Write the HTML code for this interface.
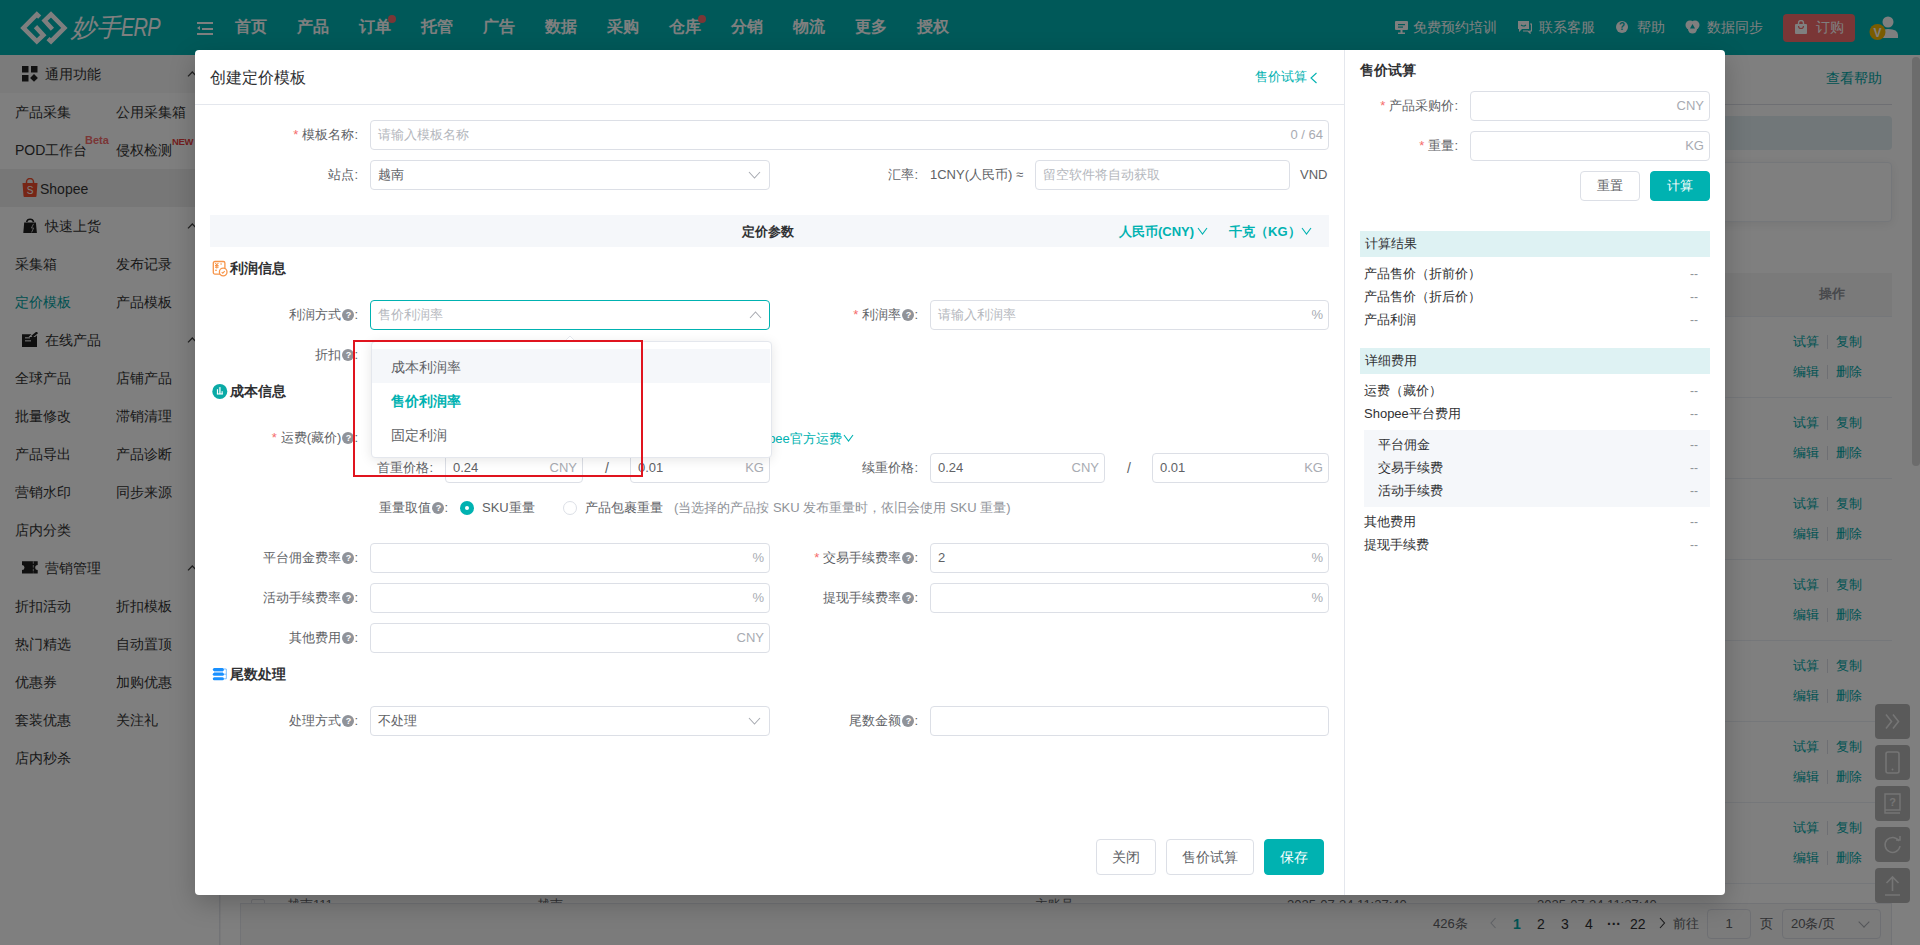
<!DOCTYPE html>
<html><head><meta charset="utf-8">
<style>
*{box-sizing:border-box;margin:0;padding:0}
html,body{width:1920px;height:945px;overflow:hidden;background:#f2f3f5;font-family:"Liberation Sans",sans-serif;color:#333}
.a{position:absolute}
.hdr{left:0;top:0;width:1920px;height:55px;background:#00b3b3}
.nav{top:14px;height:26px;line-height:26px;font-size:16px;font-weight:bold;color:#fff}
.hr{top:14px;height:26px;line-height:26px;font-size:14px;color:#fff}
.side{left:0;top:55px;width:220px;height:890px;background:#fff;border-right:1px solid #e4e7ed}
.sh{left:0;width:220px;height:38px;background:#f6f6f6}
.st{font-size:14px;color:#333;height:38px;line-height:38px;white-space:nowrap}
.mask{left:0;top:0;width:1920px;height:945px;background:rgba(0,0,0,.5)}
.modal{left:195px;top:50px;width:1530px;height:845px;background:#fff;border-radius:4px;box-shadow:0 8px 26px rgba(0,0,0,.22)}
.lbl{font-size:13px;color:#606266;height:30px;line-height:30px;text-align:right;white-space:nowrap}
.inp{height:30px;border:1px solid #dcdfe6;border-radius:4px;background:#fff;font-size:13px;line-height:28px;padding-left:7px;color:#606266;white-space:nowrap}
.ph{color:#b4b7bd}
.sfx{position:absolute;right:5px;top:0;color:#a8abb2;font-size:13px}
.star{color:#f56c6c;margin-right:4px}
.q{display:inline-block;width:12px;height:12px;border-radius:50%;background:#909399;color:#fff;font-size:9px;line-height:12px;text-align:center;font-weight:bold;vertical-align:1px;margin-left:1px}
.arr{position:absolute;right:10px;top:10px;width:8px;height:8px;border-right:1px solid #a8abb2;border-bottom:1px solid #a8abb2;transform:rotate(45deg)}
.sec{font-size:14px;font-weight:bold;color:#303133;height:20px;line-height:20px}
.btn{height:36px;border:1px solid #dcdfe6;border-radius:4px;background:#fff;font-size:14px;line-height:34px;text-align:center;color:#606266}
.btnp{background:#00b2b1;border-color:#00b2b1;color:#fff}
.teal{color:#00b2b1}
</style></head><body>

<!-- ============ BACKGROUND PAGE ============ -->
<div class="a hdr"></div>
<!-- logo -->
<svg class="a" style="left:16px;top:8px" width="56" height="40" viewBox="0 0 56 40">
<g fill="none" stroke="#fff" stroke-width="4.5" stroke-linejoin="miter" stroke-linecap="butt">
<path d="M23.7 9.2 L20.8 6.4 L7.4 19.9 L20.8 33.4 L27.35 27.1 L19.5 18.6"/>
<path d="M32 30.7 L35 33.4 L48.4 19.9 L35 6.45 L28.6 12.7 L36.4 21.2"/>
</g></svg>
<div class="a" style="left:71px;top:10px;height:34px;line-height:34px;font-size:25px;font-style:italic;color:#fff;white-space:nowrap">妙手<span style="display:inline-block;transform:scaleX(.8);transform-origin:0 50%;letter-spacing:-1px">ERP</span></div>
<div class="a" style="left:197px;top:22px;width:16px;height:13px">
 <div class="a" style="left:0;top:0;width:16px;height:2px;background:#fff"></div>
 <div class="a" style="left:5px;top:5.5px;width:11px;height:2px;background:#fff"></div>
 <div class="a" style="left:0;top:11px;width:16px;height:2px;background:#fff"></div>
 <div class="a" style="left:0;top:4px;width:0;height:0;border-top:2.5px solid transparent;border-bottom:2.5px solid transparent;border-right:3.5px solid #fff"></div>
</div>
<div class="a nav" style="left:235px">首页</div>
<div class="a nav" style="left:297px">产品</div>
<div class="a nav" style="left:359px">订单</div>
<div class="a nav" style="left:421px">托管</div>
<div class="a nav" style="left:483px">广告</div>
<div class="a nav" style="left:545px">数据</div>
<div class="a nav" style="left:607px">采购</div>
<div class="a nav" style="left:669px">仓库</div>
<div class="a nav" style="left:731px">分销</div>
<div class="a nav" style="left:793px">物流</div>
<div class="a nav" style="left:855px">更多</div>
<div class="a nav" style="left:917px">授权</div>
<div class="a" style="left:388px;top:15px;width:8px;height:8px;border-radius:50%;background:#f56c6c"></div>
<div class="a" style="left:698px;top:15px;width:8px;height:8px;border-radius:50%;background:#f56c6c"></div>

<svg class="a" style="left:1395px;top:21px" width="13" height="13" viewBox="0 0 13 13"><rect x="0" y="0" width="13" height="9" rx="1" fill="#fff"/><rect x="3" y="3" width="7" height="1.2" fill="#00b3b3"/><rect x="3" y="5.5" width="5" height="1.2" fill="#00b3b3"/><rect x="5.5" y="9" width="2" height="3" fill="#fff"/><rect x="3" y="11.5" width="7" height="1.5" fill="#fff"/></svg>
<div class="a hr" style="left:1413px">免费预约培训</div>
<svg class="a" style="left:1517px;top:20px" width="15" height="14" viewBox="0 0 15 14"><path d="M1 1 H12 V9 H5 L2 12 V9 H1 Z" fill="#fff"/><path d="M13 4 H14.5 V11 H13 V13 L11 11 H6" fill="none" stroke="#fff" stroke-width="1.2"/><path d="M4 5 Q6.5 7 9 5" stroke="#00b3b3" stroke-width="1.2" fill="none"/></svg>
<div class="a hr" style="left:1539px">联系客服</div>
<div class="a" style="left:1616px;top:21px;width:12px;height:12px;border-radius:50%;background:#fff;color:#00b3b3;font-size:10px;font-weight:bold;line-height:12px;text-align:center">?</div>
<div class="a hr" style="left:1637px">帮助</div>
<svg class="a" style="left:1685px;top:20px" width="15" height="14" viewBox="0 0 15 14"><circle cx="5" cy="5" r="4.5" fill="#fff"/><circle cx="10" cy="5" r="4.5" fill="#fff"/><circle cx="7.5" cy="9" r="4.5" fill="#fff"/><path d="M7.5 4 L10 8.5 H5 Z" fill="#00b3b3"/></svg>
<div class="a hr" style="left:1707px">数据同步</div>
<div class="a" style="left:1783px;top:14px;width:72px;height:28px;border-radius:4px;background:#f56c6c"></div>
<svg class="a" style="left:1795px;top:20px" width="12" height="14" viewBox="0 0 12 14"><rect x="0" y="4" width="12" height="10" rx="1" fill="#fff"/><path d="M3.5 6 V3 A2.5 2.5 0 0 1 8.5 3 V6" fill="none" stroke="#fff" stroke-width="1.4"/><path d="M3.5 6 A2.5 2.5 0 0 0 8.5 6" fill="none" stroke="#f56c6c" stroke-width="1.2"/></svg>
<div class="a hr" style="left:1816px">订购</div>
<svg class="a" style="left:1868px;top:16px" width="32" height="26" viewBox="0 0 32 26"><circle cx="20" cy="6" r="5.5" fill="#fff"/><path d="M10 22 Q10 13 20 13 Q30 13 30 19 V22 Z" fill="#fff"/><circle cx="9.5" cy="16" r="8" fill="#f5b800"/><text x="9.5" y="20.5" font-size="12" font-weight="bold" text-anchor="middle" fill="#fff" font-family="Liberation Sans">V</text></svg>
<div class="a side"></div>
<div class="a sh" style="top:55px"></div>
<svg class="a" style="left:22px;top:66px" width="16" height="16" viewBox="0 0 16 16"><rect x="0" y="0" width="6.5" height="6.5" fill="#222"/><rect x="9" y="0" width="6.5" height="6.5" fill="#222"/><rect x="0" y="9" width="6.5" height="6.5" fill="#222"/><rect x="9.2" y="9.2" width="5.5" height="5.5" fill="#222" transform="rotate(45 12 12)"/></svg>
<div class="a st" style="left:45px;top:55px">通用功能</div>
<svg class="a" style="left:187.2px;top:71.1px" width="10.6" height="6.4" viewBox="0 0 10.6 6.4"><path d="M1 5.4 L5.3 1 L9.6 5.4" fill="none" stroke="#444" stroke-width="1.3"/></svg>
<div class="a st" style="left:15px;top:93px">产品采集</div>
<div class="a st" style="left:116px;top:93px">公用采集箱</div>
<div class="a st" style="left:15px;top:131px">POD工作台</div>
<div class="a st" style="left:116px;top:131px">侵权检测</div>
<div class="a" style="left:85px;top:133px;font-size:11px;font-weight:bold;color:#f56c6c;line-height:14px">Beta</div>
<div class="a" style="left:172px;top:135px;font-size:9.5px;font-weight:bold;color:#e83e3e;line-height:14px;letter-spacing:-0.3px">NEW</div>
<div class="a" style="left:0;top:169px;width:220px;height:38px;background:#efefef"></div>
<svg class="a" style="left:22px;top:178px" width="16" height="19" viewBox="0 0 16 19"><path d="M4.5 5 V4 A3.5 3.5 0 0 1 11.5 4 V5" fill="none" stroke="#ee4d2d" stroke-width="1.5"/><path d="M0.5 5 H15.5 L14.5 18 A1 1 0 0 1 13.5 19 H2.5 A1 1 0 0 1 1.5 18 Z" fill="#ee4d2d"/><text x="8" y="16" font-size="10" text-anchor="middle" fill="#fff" font-family="Liberation Sans">S</text></svg>
<div class="a st" style="left:40px;top:170px">Shopee</div>
<svg class="a" style="left:22px;top:216px" width="16" height="18" viewBox="0 0 16 18"><path d="M4.6 6 A3.6 3.6 0 0 1 11.6 6" fill="none" stroke="#1e1e1e" stroke-width="1.6"/><path d="M2.2 6.4 H13.9 L14.9 16.9 H1.3 Z" fill="#1e1e1e"/><path d="M11.6 7.8 L9.4 12 H11.6 L9.6 16.4" fill="none" stroke="#ccc" stroke-width="0.9"/></svg>
<div class="a st" style="left:45px;top:207px">快速上货</div>
<svg class="a" style="left:187.2px;top:223.10000000000002px" width="10.6" height="6.4" viewBox="0 0 10.6 6.4"><path d="M1 5.4 L5.3 1 L9.6 5.4" fill="none" stroke="#444" stroke-width="1.3"/></svg>
<div class="a st" style="left:15px;top:245px">采集箱</div>
<div class="a st" style="left:116px;top:245px">发布记录</div>
<div class="a st" style="left:15px;top:283px"><span style="color:#00a3a3">定价模板</span></div>
<div class="a st" style="left:116px;top:283px">产品模板</div>
<svg class="a" style="left:22px;top:332px" width="16" height="16" viewBox="0 0 16 16"><path d="M0 2.2 H9.4 L6.6 5 H13 L15 3.2 V15 H0 Z" fill="#1e1e1e"/><rect x="3" y="5.3" width="5" height="1.1" fill="#eee"/><rect x="3" y="8.3" width="6" height="1.1" fill="#eee"/><path d="M10 4.6 L15.3 0.3" stroke="#1e1e1e" stroke-width="2.2"/></svg>
<div class="a st" style="left:45px;top:321px">在线产品</div>
<svg class="a" style="left:187.2px;top:337.1px" width="10.6" height="6.4" viewBox="0 0 10.6 6.4"><path d="M1 5.4 L5.3 1 L9.6 5.4" fill="none" stroke="#444" stroke-width="1.3"/></svg>
<div class="a st" style="left:15px;top:359px">全球产品</div>
<div class="a st" style="left:116px;top:359px">店铺产品</div>
<div class="a st" style="left:15px;top:397px">批量修改</div>
<div class="a st" style="left:116px;top:397px">滞销清理</div>
<div class="a st" style="left:15px;top:435px">产品导出</div>
<div class="a st" style="left:116px;top:435px">产品诊断</div>
<div class="a st" style="left:15px;top:473px">营销水印</div>
<div class="a st" style="left:116px;top:473px">同步来源</div>
<div class="a st" style="left:15px;top:511px">店内分类</div>
<svg class="a" style="left:22px;top:560px" width="16" height="16" viewBox="0 0 16 16"><path d="M0 1.2 H15.7 V4.9 A2.5 2.5 0 0 0 15.7 9.9 V13.6 H0 V9.9 A2.5 2.5 0 0 0 0 4.9 Z" fill="#1e1e1e"/><path d="M11.3 1.2 V13.6" stroke="#bbb" stroke-width="0.9" stroke-dasharray="2.6 1.2"/></svg>
<div class="a st" style="left:45px;top:549px">营销管理</div>
<svg class="a" style="left:187.2px;top:565.0999999999999px" width="10.6" height="6.4" viewBox="0 0 10.6 6.4"><path d="M1 5.4 L5.3 1 L9.6 5.4" fill="none" stroke="#444" stroke-width="1.3"/></svg>
<div class="a st" style="left:15px;top:587px">折扣活动</div>
<div class="a st" style="left:116px;top:587px">折扣模板</div>
<div class="a st" style="left:15px;top:625px">热门精选</div>
<div class="a st" style="left:116px;top:625px">自动置顶</div>
<div class="a st" style="left:15px;top:663px">优惠券</div>
<div class="a st" style="left:116px;top:663px">加购优惠</div>
<div class="a st" style="left:15px;top:701px">套装优惠</div>
<div class="a st" style="left:116px;top:701px">关注礼</div>
<div class="a st" style="left:15px;top:739px">店内秒杀</div>

<!-- content bg -->
<div class="a" style="left:221px;top:55px;width:1699px;height:890px;background:#fff"></div>
<div class="a teal" style="left:1826px;top:68px;font-size:14px;line-height:20px;color:#00a8a8">查看帮助</div>
<div class="a" style="left:240px;top:104px;width:1652px;height:1px;background:#dcdfe6"></div>
<div class="a" style="left:240px;top:116px;width:1652px;height:34px;background:#e3eef2;border-radius:4px"></div>
<div class="a" style="left:240px;top:162px;width:1652px;height:60px;background:#fff;border:1px solid #ebeef5;border-radius:4px;box-shadow:0 2px 12px rgba(0,0,0,.08)"></div>
<div class="a" style="left:240px;top:273px;width:1652px;height:44px;background:#f4f4f5;border-bottom:1px solid #ebeef5"></div>
<div class="a" style="left:1819px;top:284px;font-size:13px;font-weight:bold;line-height:20px;color:#909399">操作</div>
<div class="a" style="left:1793px;top:332px;font-size:13px;line-height:20px;color:#00a8a8">试算</div><div class="a" style="left:1827px;top:335px;width:1px;height:14px;background:#dcdfe6"></div><div class="a" style="left:1836px;top:332px;font-size:13px;line-height:20px;color:#00a8a8">复制</div>
<div class="a" style="left:1793px;top:362px;font-size:13px;line-height:20px;color:#00a8a8">编辑</div><div class="a" style="left:1827px;top:365px;width:1px;height:14px;background:#dcdfe6"></div><div class="a" style="left:1836px;top:362px;font-size:13px;line-height:20px;color:#00a8a8">删除</div>
<div class="a" style="left:240px;top:397px;width:1652px;height:1px;background:#ebeef5"></div>
<div class="a" style="left:1793px;top:413px;font-size:13px;line-height:20px;color:#00a8a8">试算</div><div class="a" style="left:1827px;top:416px;width:1px;height:14px;background:#dcdfe6"></div><div class="a" style="left:1836px;top:413px;font-size:13px;line-height:20px;color:#00a8a8">复制</div>
<div class="a" style="left:1793px;top:443px;font-size:13px;line-height:20px;color:#00a8a8">编辑</div><div class="a" style="left:1827px;top:446px;width:1px;height:14px;background:#dcdfe6"></div><div class="a" style="left:1836px;top:443px;font-size:13px;line-height:20px;color:#00a8a8">删除</div>
<div class="a" style="left:240px;top:478px;width:1652px;height:1px;background:#ebeef5"></div>
<div class="a" style="left:1793px;top:494px;font-size:13px;line-height:20px;color:#00a8a8">试算</div><div class="a" style="left:1827px;top:497px;width:1px;height:14px;background:#dcdfe6"></div><div class="a" style="left:1836px;top:494px;font-size:13px;line-height:20px;color:#00a8a8">复制</div>
<div class="a" style="left:1793px;top:524px;font-size:13px;line-height:20px;color:#00a8a8">编辑</div><div class="a" style="left:1827px;top:527px;width:1px;height:14px;background:#dcdfe6"></div><div class="a" style="left:1836px;top:524px;font-size:13px;line-height:20px;color:#00a8a8">删除</div>
<div class="a" style="left:240px;top:559px;width:1652px;height:1px;background:#ebeef5"></div>
<div class="a" style="left:1793px;top:575px;font-size:13px;line-height:20px;color:#00a8a8">试算</div><div class="a" style="left:1827px;top:578px;width:1px;height:14px;background:#dcdfe6"></div><div class="a" style="left:1836px;top:575px;font-size:13px;line-height:20px;color:#00a8a8">复制</div>
<div class="a" style="left:1793px;top:605px;font-size:13px;line-height:20px;color:#00a8a8">编辑</div><div class="a" style="left:1827px;top:608px;width:1px;height:14px;background:#dcdfe6"></div><div class="a" style="left:1836px;top:605px;font-size:13px;line-height:20px;color:#00a8a8">删除</div>
<div class="a" style="left:240px;top:640px;width:1652px;height:1px;background:#ebeef5"></div>
<div class="a" style="left:1793px;top:656px;font-size:13px;line-height:20px;color:#00a8a8">试算</div><div class="a" style="left:1827px;top:659px;width:1px;height:14px;background:#dcdfe6"></div><div class="a" style="left:1836px;top:656px;font-size:13px;line-height:20px;color:#00a8a8">复制</div>
<div class="a" style="left:1793px;top:686px;font-size:13px;line-height:20px;color:#00a8a8">编辑</div><div class="a" style="left:1827px;top:689px;width:1px;height:14px;background:#dcdfe6"></div><div class="a" style="left:1836px;top:686px;font-size:13px;line-height:20px;color:#00a8a8">删除</div>
<div class="a" style="left:240px;top:721px;width:1652px;height:1px;background:#ebeef5"></div>
<div class="a" style="left:1793px;top:737px;font-size:13px;line-height:20px;color:#00a8a8">试算</div><div class="a" style="left:1827px;top:740px;width:1px;height:14px;background:#dcdfe6"></div><div class="a" style="left:1836px;top:737px;font-size:13px;line-height:20px;color:#00a8a8">复制</div>
<div class="a" style="left:1793px;top:767px;font-size:13px;line-height:20px;color:#00a8a8">编辑</div><div class="a" style="left:1827px;top:770px;width:1px;height:14px;background:#dcdfe6"></div><div class="a" style="left:1836px;top:767px;font-size:13px;line-height:20px;color:#00a8a8">删除</div>
<div class="a" style="left:240px;top:802px;width:1652px;height:1px;background:#ebeef5"></div>
<div class="a" style="left:1793px;top:818px;font-size:13px;line-height:20px;color:#00a8a8">试算</div><div class="a" style="left:1827px;top:821px;width:1px;height:14px;background:#dcdfe6"></div><div class="a" style="left:1836px;top:818px;font-size:13px;line-height:20px;color:#00a8a8">复制</div>
<div class="a" style="left:1793px;top:848px;font-size:13px;line-height:20px;color:#00a8a8">编辑</div><div class="a" style="left:1827px;top:851px;width:1px;height:14px;background:#dcdfe6"></div><div class="a" style="left:1836px;top:848px;font-size:13px;line-height:20px;color:#00a8a8">删除</div>
<div class="a" style="left:240px;top:883px;width:1652px;height:1px;background:#ebeef5"></div>
<div class="a" style="left:251px;top:899px;width:14px;height:14px;border:1px solid #dcdfe6;border-radius:2px"></div>
<div class="a" style="left:287px;top:896px;font-size:13px;line-height:18px;color:#606266">越南111</div>
<div class="a" style="left:537px;top:896px;font-size:13px;line-height:18px;color:#606266">越南</div>
<div class="a" style="left:1035px;top:896px;font-size:13px;line-height:18px;color:#606266">主账号</div>
<div class="a" style="left:1287px;top:896px;font-size:13px;line-height:18px;color:#606266">2025-07-24 11:27:40</div>
<div class="a" style="left:1537px;top:896px;font-size:13px;line-height:18px;color:#606266">2025-07-24 11:27:40</div>
<!-- pagination footer -->
<div class="a" style="left:240px;top:903px;width:1652px;height:42px;background:#f6f6f6;border-right:1px solid #e4e7ed;border-top:1px solid #e4e7ed;border-left:1px solid #e4e7ed"></div>
<div class="a" style="left:1433px;top:914px;font-size:13px;line-height:20px;color:#606266">426条</div>
<svg class="a" style="left:1490px;top:917px" width="7" height="12" viewBox="0 0 7 12"><path d="M5.5 1 L1 6 L5.5 11" fill="none" stroke="#c0c4cc" stroke-width="1.1"/></svg>
<div class="a" style="left:1513px;top:913px;font-size:14px;line-height:22px;color:#00a8a8;font-weight:bold">1</div>
<div class="a" style="left:1537px;top:913px;font-size:14px;line-height:22px;color:#303133">2</div>
<div class="a" style="left:1561px;top:913px;font-size:14px;line-height:22px;color:#303133">3</div>
<div class="a" style="left:1585px;top:913px;font-size:14px;line-height:22px;color:#303133">4</div>
<div class="a" style="left:1607px;top:913px;font-size:14px;line-height:22px;color:#303133;font-weight:bold">···</div>
<div class="a" style="left:1630px;top:913px;font-size:14px;line-height:22px;color:#303133">22</div>
<svg class="a" style="left:1659px;top:917px" width="7" height="12" viewBox="0 0 7 12"><path d="M1 1 L5.5 6 L1 11" fill="none" stroke="#303133" stroke-width="1.1"/></svg>
<div class="a" style="left:1673px;top:914px;font-size:13px;line-height:20px;color:#606266">前往</div>
<div class="a" style="left:1707px;top:909px;width:44px;height:30px;border:1px solid #dcdfe6;border-radius:4px;font-size:13px;line-height:28px;text-align:center;color:#606266">1</div>
<div class="a" style="left:1760px;top:914px;font-size:13px;line-height:20px;color:#606266">页</div>
<div class="a" style="left:1782px;top:909px;width:99px;height:30px;border:1px solid #dcdfe6;border-radius:4px;font-size:13px;line-height:28px;padding-left:8px;color:#606266">20条/页<div class="arr" style="top:8px;right:12px"></div></div>
<!-- scrollbar -->
<div class="a" style="left:1912px;top:57px;width:8px;height:409px;background:#d8d8d8;border-radius:4px"></div>
<svg class="a" style="left:1875px;top:704px" width="35" height="35" viewBox="0 0 35 35"><rect width="35" height="35" rx="4" fill="#b4b4b4"/><g opacity=".72"><path d="M11 10.5 L16.5 17.5 L11 24.5 M18 10.5 L23.5 17.5 L18 24.5" fill="none" stroke="#fff" stroke-width="1.6"/></g></svg>
<svg class="a" style="left:1875px;top:745px" width="35" height="35" viewBox="0 0 35 35"><rect width="35" height="35" rx="4" fill="#b4b4b4"/><g opacity=".72"><rect x="11" y="7" width="13" height="21" rx="2" fill="none" stroke="#fff" stroke-width="1.6"/><circle cx="17.5" cy="24.5" r="1" fill="#fff"/></g></svg>
<svg class="a" style="left:1875px;top:786px" width="35" height="35" viewBox="0 0 35 35"><rect width="35" height="35" rx="4" fill="#b4b4b4"/><g opacity=".72"><path d="M10 8 H25 V24 H10 Z M10 24 V27 H25" fill="none" stroke="#fff" stroke-width="1.4"/><text x="17.5" y="20" font-size="11" font-weight="bold" text-anchor="middle" fill="#fff" font-family="Liberation Sans">?</text></g></svg>
<svg class="a" style="left:1875px;top:827px" width="35" height="35" viewBox="0 0 35 35"><rect width="35" height="35" rx="4" fill="#b4b4b4"/><g opacity=".72"><path d="M24 14 A7.5 7.5 0 1 0 25 19" fill="none" stroke="#fff" stroke-width="1.5"/><path d="M21 13 L25 13 L25 9" fill="none" stroke="#fff" stroke-width="1.5"/></g></svg>
<svg class="a" style="left:1875px;top:868px" width="35" height="35" viewBox="0 0 35 35"><rect width="35" height="35" rx="4" fill="#b4b4b4"/><g opacity=".72"><path d="M17.5 9 V23 M11.5 15 L17.5 9 L23.5 15 M10 27 H25" fill="none" stroke="#fff" stroke-width="1.6"/></g></svg>
<!-- overlay -->
<div class="a mask"></div>

<!-- ============ MODAL ============ -->
<div class="a modal"></div>
<div class="a" style="left:210px;top:67px;font-size:16px;line-height:22px;color:#303133">创建定价模板</div>
<div class="a" style="left:1255px;top:67px;font-size:13px;line-height:20px;color:#00b2b1">售价试算</div>
<svg class="a" style="left:1310.25px;top:71.5px" width="7.5" height="12" viewBox="0 0 7.5 12"><path d="M6.5 1 L1 6.0 L6.5 11" fill="none" stroke="#00b2b1" stroke-width="1.1"/></svg>
<div class="a" style="left:195px;top:104px;width:1149px;height:1px;background:#e4e7ed"></div>
<div class="a" style="left:1344px;top:50px;width:1px;height:845px;background:#e4e7ed"></div>
<div class="a lbl" style="left:58px;width:300px;top:120px"><span class="star">*</span>模板名称:</div>
<div class="a inp ph" style="left:370px;top:120px;width:959px;height:30px">请输入模板名称<span class="sfx">0 / 64</span></div>
<div class="a lbl" style="left:58px;width:300px;top:160px">站点:</div>
<div class="a inp" style="left:370px;top:160px;width:400px;height:30px">越南</div>
<svg class="a" style="left:748.0px;top:171.4px" width="13" height="8" viewBox="0 0 13 8"><path d="M1 1 L6.5 7 L12 1" fill="none" stroke="#a8abb2" stroke-width="1.1"/></svg>
<div class="a lbl" style="left:618px;width:300px;top:160px">汇率:</div>
<div class="a" style="left:930px;top:165px;font-size:13px;line-height:20px;color:#606266">1CNY(人民币) ≈</div>
<div class="a inp ph" style="left:1035px;top:160px;width:255px;height:30px">留空软件将自动获取</div>
<div class="a" style="left:1300px;top:165px;font-size:13px;line-height:20px;color:#606266">VND</div>
<div class="a" style="left:210px;top:215px;width:1119px;height:32px;background:#f5f7fa"></div>
<div class="a" style="left:742px;top:222px;font-size:13px;line-height:20px;font-weight:bold;color:#303133">定价参数</div>
<div class="a" style="left:1119px;top:222px;font-size:13px;line-height:20px;font-weight:bold;color:#00b2b1">人民币(CNY)</div>
<svg class="a" style="left:1197.0px;top:227.3px" width="11" height="8" viewBox="0 0 11 8"><path d="M1 1 L5.5 7 L10 1" fill="none" stroke="#00b2b1" stroke-width="1.1"/></svg>
<div class="a" style="left:1229px;top:222px;font-size:13px;line-height:20px;font-weight:bold;color:#00b2b1">千克（KG）</div>
<svg class="a" style="left:1301.0px;top:227.3px" width="11" height="8" viewBox="0 0 11 8"><path d="M1 1 L5.5 7 L10 1" fill="none" stroke="#00b2b1" stroke-width="1.1"/></svg>
<svg class="a" style="left:212px;top:260px" width="16" height="17" viewBox="0 0 16 17"><rect x="1.3" y="1.5" width="11.6" height="12.6" rx="1.6" fill="none" stroke="#f7954a" stroke-width="1.3"/><path d="M3.2 3 L4.8 4.8 L6.4 3 M4.8 4.8 V8.6 M3 5.6 H6.6 M3 7.3 H6.6 M8.3 4 H10 M3 10.3 H5" fill="none" stroke="#f7954a" stroke-width="1.05"/><circle cx="11.2" cy="12" r="3.8" fill="#fff" stroke="#f7954a" stroke-width="1.3"/><path d="M9.7 12.2 L10.8 13.2 L12.7 11.2" fill="none" stroke="#f7954a" stroke-width="1.05"/></svg>
<div class="a sec" style="left:230px;top:258px">利润信息</div>
<div class="a lbl" style="left:58px;width:300px;top:300px">利润方式<span class="q">?</span>:</div>
<div class="a inp ph" style="left:370px;top:300px;width:400px;height:30px;border-color:#00b2b1">售价利润率</div>
<svg class="a" style="left:748.5px;top:310.6px" width="13" height="8" viewBox="0 0 13 8"><path d="M1 7 L6.5 1 L12 7" fill="none" stroke="#a8abb2" stroke-width="1.1"/></svg>
<div class="a lbl" style="left:618px;width:300px;top:300px"><span class="star">*</span>利润率<span class="q">?</span>:</div>
<div class="a inp ph" style="left:930px;top:300px;width:399px;height:30px">请输入利润率<span class="sfx">%</span></div>
<div class="a lbl" style="left:58px;width:300px;top:340px">折扣<span class="q">?</span>:</div>
<svg class="a" style="left:212px;top:383px" width="16" height="16" viewBox="0 0 16 16"><circle cx="7.8" cy="8.4" r="7.5" fill="#0aaaa6"/><rect x="4.9" y="6.2" width="1.1" height="5" fill="#fff"/><rect x="6.9" y="4.1" width="1.9" height="7" fill="#b5e4e3"/><rect x="9.6" y="8.2" width="1.1" height="3" fill="#fff"/><rect x="4.9" y="10.4" width="5.9" height="1.1" fill="#fff"/></svg>
<div class="a sec" style="left:230px;top:381px">成本信息</div>
<div class="a lbl" style="left:58px;width:300px;top:423px"><span class="star">*</span>运费(藏价)<span class="q">?</span>:</div>
<div class="a" style="left:745px;top:429px;font-size:13px;line-height:20px;color:#00b2b1">Shopee官方运费</div>
<svg class="a" style="left:843.0px;top:434.3px" width="11" height="8" viewBox="0 0 11 8"><path d="M1 1 L5.5 7 L10 1" fill="none" stroke="#00b2b1" stroke-width="1.1"/></svg>
<div class="a lbl" style="left:333px;width:100px;top:453px">首重价格:</div>
<div class="a inp" style="left:445px;top:453px;width:138px;height:30px">0.24<span class="sfx">CNY</span></div>
<div class="a" style="left:605px;top:458px;font-size:14px;line-height:20px;color:#606266">/</div>
<div class="a inp" style="left:630px;top:453px;width:140px;height:30px">0.01<span class="sfx">KG</span></div>
<div class="a lbl" style="left:818px;width:100px;top:453px">续重价格:</div>
<div class="a inp" style="left:930px;top:453px;width:175px;height:30px">0.24<span class="sfx">CNY</span></div>
<div class="a" style="left:1127px;top:458px;font-size:14px;line-height:20px;color:#606266">/</div>
<div class="a inp" style="left:1152px;top:453px;width:177px;height:30px">0.01<span class="sfx">KG</span></div>
<div class="a lbl" style="left:248px;width:200px;top:493px">重量取值<span class="q">?</span>:</div>
<div class="a" style="left:460px;top:501px;width:14px;height:14px;border-radius:50%;background:#00b2b1"></div><div class="a" style="left:465px;top:506px;width:4px;height:4px;border-radius:50%;background:#fff"></div>
<div class="a" style="left:482px;top:498px;font-size:13px;line-height:20px;color:#606266">SKU重量</div>
<div class="a" style="left:563px;top:501px;width:14px;height:14px;border-radius:50%;border:1px solid #dcdfe6"></div>
<div class="a" style="left:585px;top:498px;font-size:13px;line-height:20px;color:#606266">产品包裹重量</div>
<div class="a" style="left:674px;top:498px;font-size:13px;line-height:20px;color:#909399">(当选择的产品按 SKU 发布重量时，依旧会使用 SKU 重量)</div>
<div class="a lbl" style="left:58px;width:300px;top:543px">平台佣金费率<span class="q">?</span>:</div>
<div class="a inp" style="left:370px;top:543px;width:400px;height:30px"><span class="sfx">%</span></div>
<div class="a lbl" style="left:618px;width:300px;top:543px"><span class="star">*</span>交易手续费率<span class="q">?</span>:</div>
<div class="a inp" style="left:930px;top:543px;width:399px;height:30px">2<span class="sfx">%</span></div>
<div class="a lbl" style="left:58px;width:300px;top:583px">活动手续费率<span class="q">?</span>:</div>
<div class="a inp" style="left:370px;top:583px;width:400px;height:30px"><span class="sfx">%</span></div>
<div class="a lbl" style="left:618px;width:300px;top:583px">提现手续费率<span class="q">?</span>:</div>
<div class="a inp" style="left:930px;top:583px;width:399px;height:30px"><span class="sfx">%</span></div>
<div class="a lbl" style="left:58px;width:300px;top:623px">其他费用<span class="q">?</span>:</div>
<div class="a inp" style="left:370px;top:623px;width:400px;height:30px"><span class="sfx">CNY</span></div>
<svg class="a" style="left:212px;top:666px" width="16" height="16" viewBox="0 0 16 16"><rect x="2" y="5" width="9" height="2" fill="#a8d4ff"/><rect x="0.8" y="2" width="11.2" height="3" rx="1.5" fill="#1890ff"/><rect x="0.8" y="6.8" width="11.2" height="3" rx="1.5" fill="#1890ff"/><rect x="0.8" y="11.3" width="11.2" height="3" rx="1.5" fill="#1890ff"/><path d="M12 3 H14.3 V12.8 H12 M12 8.2 H14.3" fill="none" stroke="#6bb6ff" stroke-width="0.9"/></svg>
<div class="a sec" style="left:230px;top:664px">尾数处理</div>
<div class="a lbl" style="left:58px;width:300px;top:706px">处理方式<span class="q">?</span>:</div>
<div class="a inp" style="left:370px;top:706px;width:400px;height:30px">不处理</div>
<svg class="a" style="left:748.0px;top:717.4px" width="13" height="8" viewBox="0 0 13 8"><path d="M1 1 L6.5 7 L12 1" fill="none" stroke="#a8abb2" stroke-width="1.1"/></svg>
<div class="a lbl" style="left:618px;width:300px;top:706px">尾数金额<span class="q">?</span>:</div>
<div class="a inp" style="left:930px;top:706px;width:399px;height:30px"></div>
<div class="a btn" style="left:1096px;top:839px;width:60px">关闭</div>
<div class="a btn" style="left:1166px;top:839px;width:88px">售价试算</div>
<div class="a btn btnp" style="left:1264px;top:839px;width:60px">保存</div>
<div class="a" style="left:371px;top:341px;width:401px;height:117px;background:#fff;border:1px solid #e4e7ed;border-radius:4px;box-shadow:0 2px 12px rgba(0,0,0,.1)"></div>
<svg class="a" style="left:563px;top:335px" width="14" height="7" viewBox="0 0 14 7"><path d="M1 7 L7 1 L13 7" fill="#fff" stroke="#e4e7ed" stroke-width="1"/></svg>
<div class="a" style="left:372px;top:349px;width:398px;height:34px;background:#f5f7fa"></div>
<div class="a" style="left:391px;top:357px;font-size:14px;line-height:20px;color:#606266">成本利润率</div>
<div class="a" style="left:391px;top:391px;font-size:14px;line-height:20px;color:#00b2b1;font-weight:bold">售价利润率</div>
<div class="a" style="left:391px;top:425px;font-size:14px;line-height:20px;color:#606266">固定利润</div>
<div class="a" style="left:353px;top:340px;width:290px;height:137px;border:2px solid #e0141e"></div>
<div class="a" style="left:1360px;top:60px;font-size:14px;line-height:20px;font-weight:bold;color:#303133">售价试算</div>
<div class="a lbl" style="left:1158px;width:300px;top:91px"><span class="star">*</span>产品采购价:</div>
<div class="a inp" style="left:1470px;top:91px;width:240px;height:30px"><span class="sfx">CNY</span></div>
<div class="a lbl" style="left:1158px;width:300px;top:131px"><span class="star">*</span>重量:</div>
<div class="a inp" style="left:1470px;top:131px;width:240px;height:30px"><span class="sfx">KG</span></div>
<div class="a btn" style="left:1580px;top:171px;width:60px;height:30px;line-height:28px;font-size:13px">重置</div>
<div class="a btn btnp" style="left:1650px;top:171px;width:60px;height:30px;line-height:28px;font-size:13px">计算</div>
<div class="a" style="left:1360px;top:231px;width:350px;height:26px;background:#def2f3"></div>
<div class="a" style="left:1365px;top:234px;font-size:13px;line-height:20px;color:#303133">计算结果</div>
<div class="a" style="left:1364px;top:264px;font-size:13px;line-height:20px;color:#303133">产品售价（折前价）</div><div class="a" style="left:1690px;top:264px;font-size:12px;line-height:20px;color:#909399">--</div>
<div class="a" style="left:1364px;top:287px;font-size:13px;line-height:20px;color:#303133">产品售价（折后价）</div><div class="a" style="left:1690px;top:287px;font-size:12px;line-height:20px;color:#909399">--</div>
<div class="a" style="left:1364px;top:310px;font-size:13px;line-height:20px;color:#303133">产品利润</div><div class="a" style="left:1690px;top:310px;font-size:12px;line-height:20px;color:#909399">--</div>
<div class="a" style="left:1360px;top:348px;width:350px;height:26px;background:#def2f3"></div>
<div class="a" style="left:1365px;top:351px;font-size:13px;line-height:20px;color:#303133">详细费用</div>
<div class="a" style="left:1364px;top:381px;font-size:13px;line-height:20px;color:#303133">运费（藏价）</div><div class="a" style="left:1690px;top:381px;font-size:12px;line-height:20px;color:#909399">--</div>
<div class="a" style="left:1364px;top:404px;font-size:13px;line-height:20px;color:#303133">Shopee平台费用</div><div class="a" style="left:1690px;top:404px;font-size:12px;line-height:20px;color:#909399">--</div>
<div class="a" style="left:1364px;top:430px;width:346px;height:77px;background:#f5f7fa"></div>
<div class="a" style="left:1378px;top:435px;font-size:13px;line-height:20px;color:#303133">平台佣金</div><div class="a" style="left:1690px;top:435px;font-size:12px;line-height:20px;color:#909399">--</div>
<div class="a" style="left:1378px;top:458px;font-size:13px;line-height:20px;color:#303133">交易手续费</div><div class="a" style="left:1690px;top:458px;font-size:12px;line-height:20px;color:#909399">--</div>
<div class="a" style="left:1378px;top:481px;font-size:13px;line-height:20px;color:#303133">活动手续费</div><div class="a" style="left:1690px;top:481px;font-size:12px;line-height:20px;color:#909399">--</div>
<div class="a" style="left:1364px;top:512px;font-size:13px;line-height:20px;color:#303133">其他费用</div><div class="a" style="left:1690px;top:512px;font-size:12px;line-height:20px;color:#909399">--</div>
<div class="a" style="left:1364px;top:535px;font-size:13px;line-height:20px;color:#303133">提现手续费</div><div class="a" style="left:1690px;top:535px;font-size:12px;line-height:20px;color:#909399">--</div>

</body></html>
